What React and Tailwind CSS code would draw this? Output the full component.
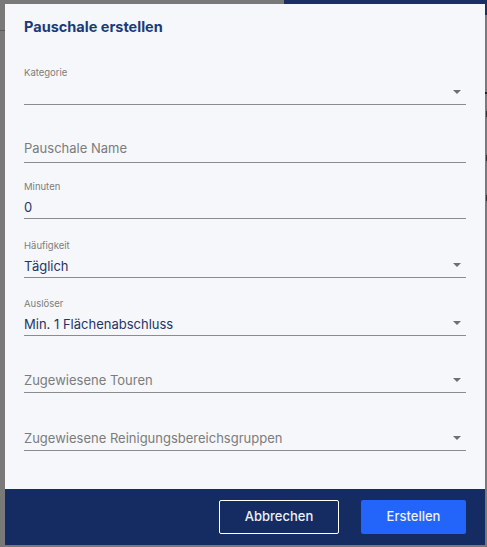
import React from "react";

const font = { fontFamily: "Inter, 'Noto Sans', sans-serif" };

function Arrow() {
  return (
    <svg width="8" height="4" viewBox="0 0 8 4" className="shrink-0">
      <path d="M0 0 L8 0 L4 4 Z" fill="#6f6f6f" />
    </svg>
  );
}

function Field({ h, label, value, placeholder, select, extraPad }) {
  return (
    <div className={`flex flex-col justify-end ${h}`}>
      {label && (
        <div className="h-[14px] text-[9.5px] leading-[14px] text-[#7d7d7d]">{label}</div>
      )}
      <div
        className={`flex items-center justify-between border-b border-[#8c8c8c] pr-[5px] ${
          extraPad ? "h-[28px] pb-[2px]" : "h-[25px]"
        }`}
      >
        {value ? (
          <span className="pt-[1px] text-[13px] leading-[22px] text-[#1f3568]">{value}</span>
        ) : (
          <span className="text-[13px] leading-[22px] text-[#7c7c7c]">{placeholder}</span>
        )}
        {select && <Arrow />}
      </div>
    </div>
  );
}

export default function App() {
  return (
    <div
      className="relative h-[547px] w-[487px] overflow-hidden bg-[#797979] pl-[5px] pt-[4px]"
      style={font}
    >
      <div className="absolute left-[284px] top-0 h-[4px] w-[203px] bg-[#1b2f66]" />
      <div className="absolute right-0 top-0 h-[15px] w-[2px] bg-[#1b2f66]" />
      <div className="absolute left-0 top-[30px] h-px w-[5px] bg-[#5a5a5a]" />
      <div className="absolute right-0 top-[92px] h-[2px] w-[2px] bg-[#222]" />
      <div className="absolute right-0 top-[111px] h-[6px] w-[1px] bg-[#333]" />
      <div className="absolute right-0 top-[155px] h-[6px] w-[1px] bg-[#333]" />
      <div className="absolute right-0 top-[195px] h-[6px] w-[1px] bg-[#333]" />

      <div className="flex h-[541px] w-[480px] flex-col bg-[#f5f7fa]">
        <div className="flex flex-1 flex-col px-[19px]">
          <div className="h-[61px] pt-[13px]">
            <h1 className="text-[14.5px] font-bold leading-[20px] text-[#1b3a78]">
              Pauschale erstellen
            </h1>
          </div>
          <Field h="h-[40px]" label="Kategorie" select />
          <Field h="h-[58px]" placeholder="Pauschale Name" extraPad />
          <Field h="h-[56px]" label="Minuten" value="0" />
          <Field h="h-[59px]" label="Häufigkeit" value="Täglich" select />
          <Field h="h-[58px]" label="Auslöser" value="Min. 1 Flächenabschluss" select />
          <Field h="h-[57px]" placeholder="Zugewiesene Touren" select />
          <Field h="h-[58px]" placeholder="Zugewiesene Reinigungsbereichsgruppen" select />
        </div>
        <div className="flex h-[56px] items-center justify-end gap-[22px] bg-[#152c63] pr-[19px]">
          <button className="h-[34px] w-[120px] rounded-[2px] border border-white text-[13px] font-medium text-[#eef1f8]">
            Abbrechen
          </button>
          <button className="h-[34px] w-[105px] rounded-[2px] bg-[#2364fb] text-[13px] font-medium text-[#eef1f8]">
            Erstellen
          </button>
        </div>
      </div>
    </div>
  );
}
